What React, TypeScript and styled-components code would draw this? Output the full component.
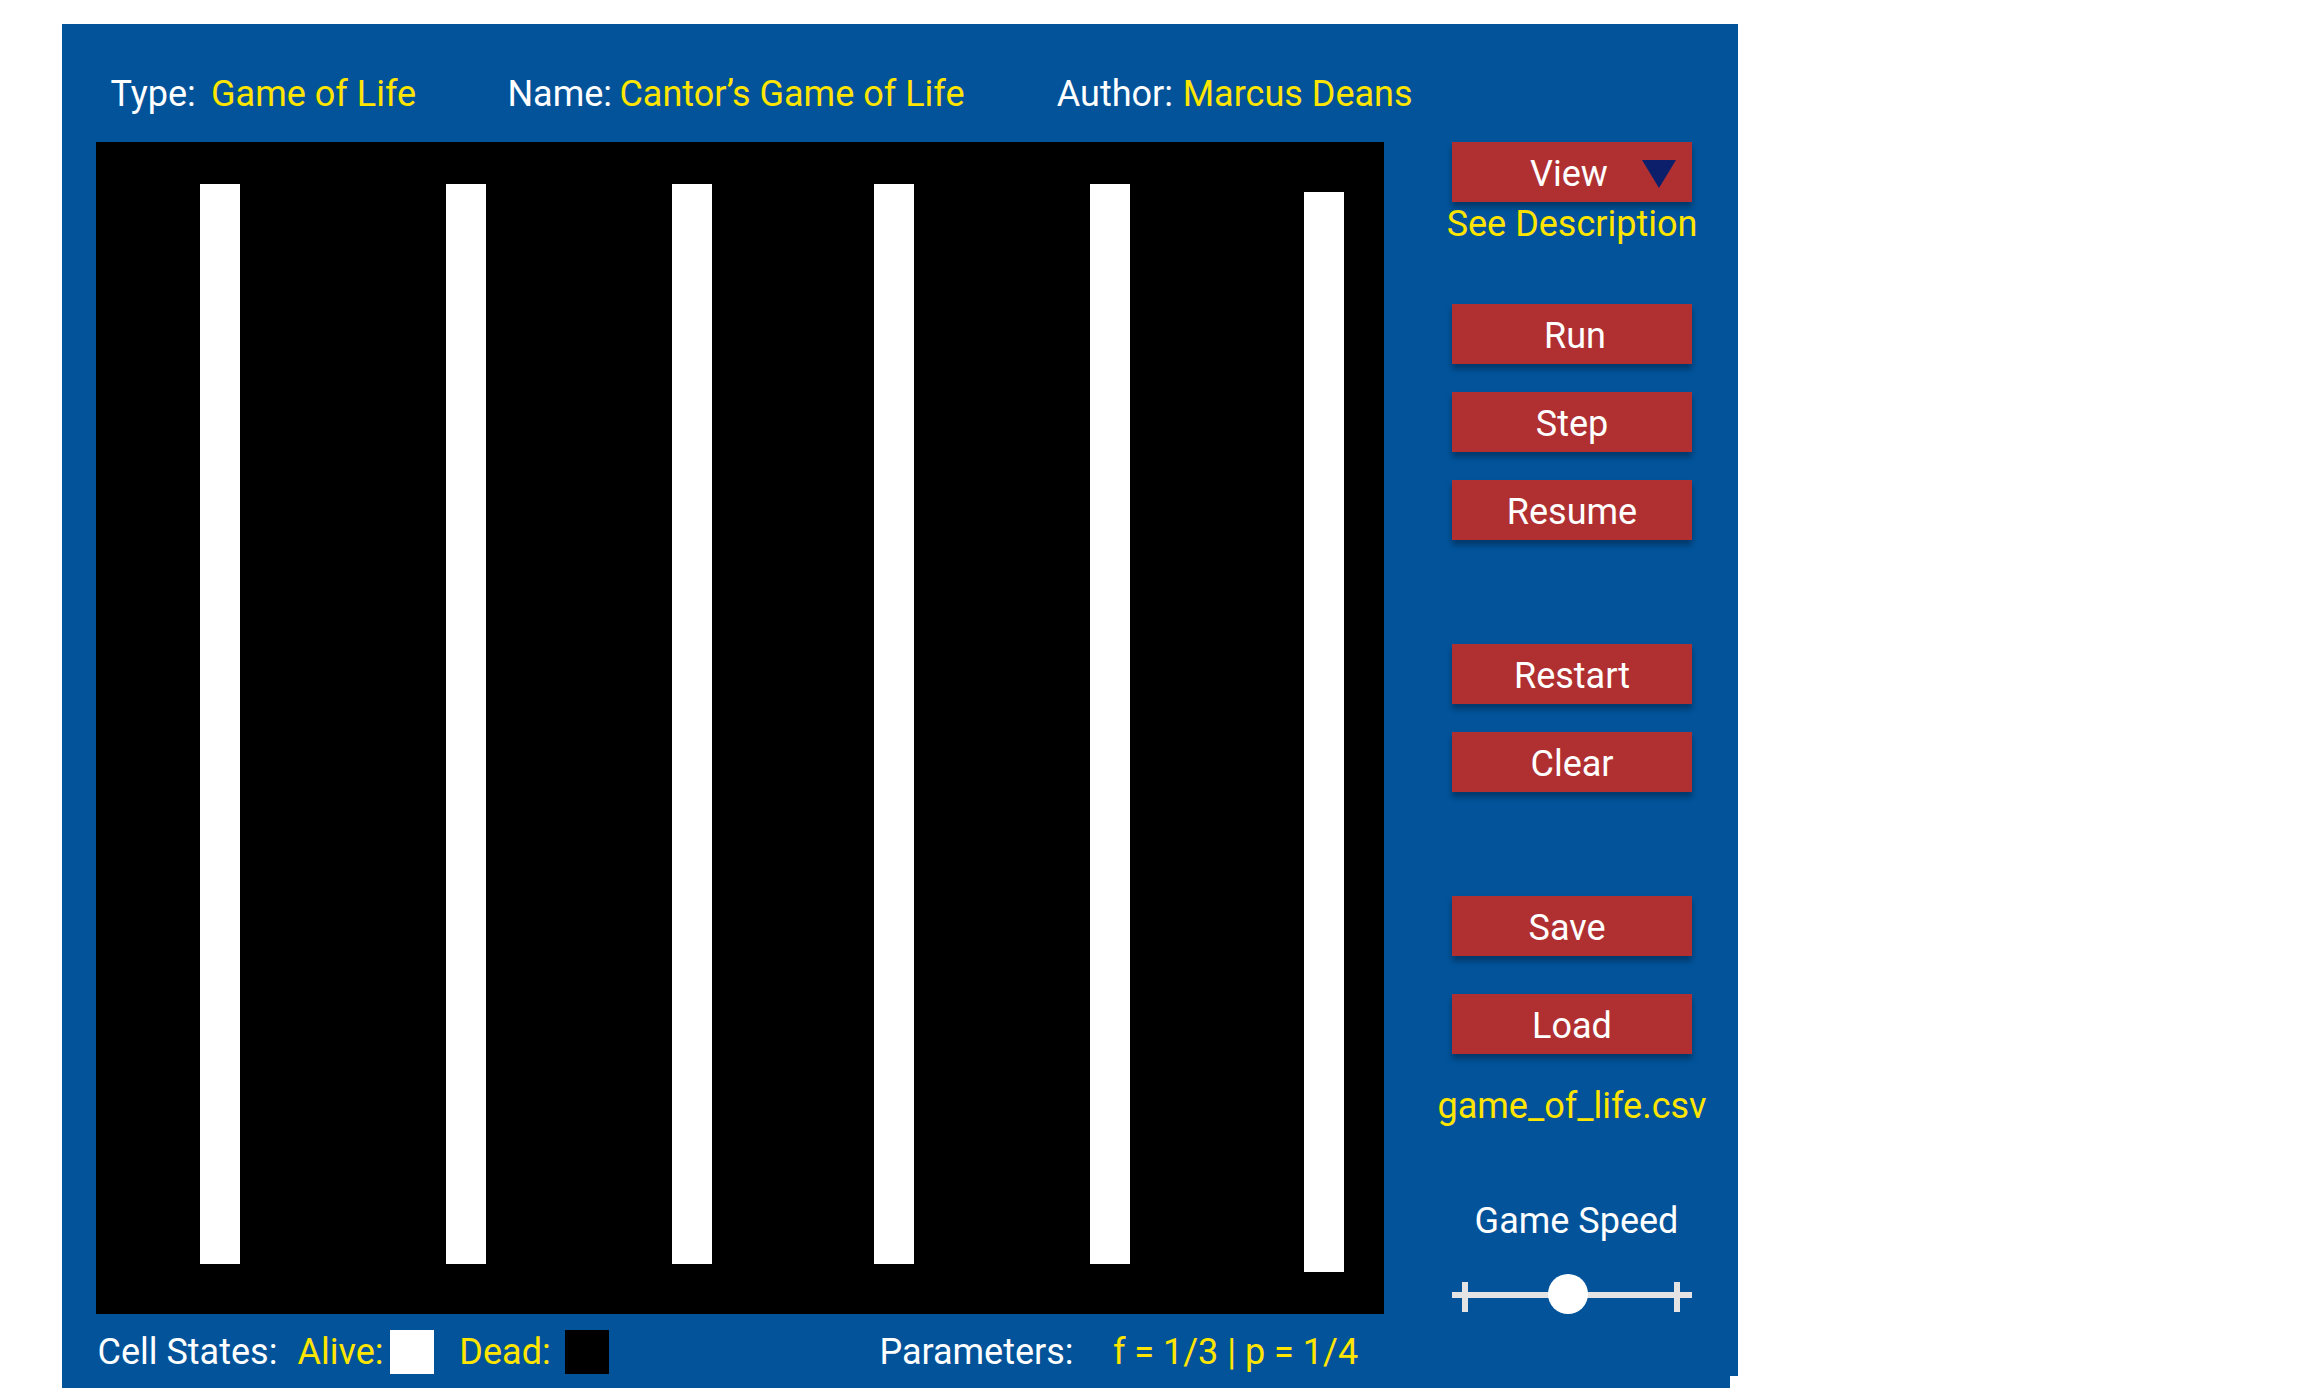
import React from "react";
import styled, { createGlobalStyle } from "styled-components";

const BLUE = "#02539a";
const RED = "#b03032";
const YELLOW = "#ffe500";
const NAVY = "#0c1f6b";

const GlobalStyle = createGlobalStyle`
  html, body { margin: 0; padding: 0; background: #ffffff; }
  body { font-family: Roboto, "Noto Sans", "Liberation Sans", sans-serif; }
  * { box-sizing: border-box; }
`;

const Page = styled.div`
  width: 2304px;
  height: 1400px;
  background: #ffffff;
  padding: 24px 0 0 62px;
`;

const Panel = styled.section`
  position: relative;
  width: 1676px;
  height: 1364px;
  background: ${BLUE};
  padding: 47.5px 0 0 34px;
  display: flex;
  flex-direction: column;
  &::after {
    content: "";
    position: absolute;
    right: 0;
    bottom: 0;
    width: 8px;
    height: 12px;
    background: #ffffff;
  }
`;

const Header = styled.header`
  display: flex;
  align-items: baseline;
  padding-left: 14.5px;
  height: 44px;
  font-size: 36px;
  line-height: 44px;
  white-space: nowrap;
`;

const Field = styled.div<{ $ml: number; $gap: number }>`
  display: flex;
  margin-left: ${(p) => p.$ml}px;
  gap: ${(p) => p.$gap}px;
`;

const Label = styled.span`
  color: #ffffff;
`;

const Value = styled.span`
  color: ${YELLOW};
`;

const Body = styled.div`
  display: flex;
  gap: 68px;
  margin-top: 26.5px;
`;

const Board = styled.div`
  flex: none;
  width: 1288px;
  height: 1172px;
  background: #000000;
  svg {
    display: block;
  }
`;

const Side = styled.aside`
  width: 240px;
  display: flex;
  flex-direction: column;
  align-items: center;
`;

const Button = styled.button<{ $mt: number; $nudge?: number }>`
  position: relative;
  flex: none;
  margin-top: ${(p) => p.$mt}px;
  width: 240px;
  height: 60px;
  border: 0;
  border-radius: 0;
  background: ${RED};
  color: #ffffff;
  font-family: Roboto, "Noto Sans", sans-serif;
  font-size: 36px;
  line-height: 56px;
  display: flex;
  align-items: center;
  justify-content: center;
  box-shadow: 0 5px 6px rgba(0, 0, 0, 0.32);
  padding: 4px ${(p) => (p.$nudge && p.$nudge < 0 ? -2 * p.$nudge : 0)}px 0
    ${(p) => (p.$nudge && p.$nudge > 0 ? 2 * p.$nudge : 0)}px;
  cursor: pointer;
`;

const Caret = styled.span`
  position: absolute;
  right: 16px;
  top: 18px;
  width: 0;
  height: 0;
  border-left: 17px solid transparent;
  border-right: 17px solid transparent;
  border-top: 28px solid ${NAVY};
`;

const SideText = styled.div<{ $mt: number; $color: string; $nudge?: number }>`
  margin-top: ${(p) => p.$mt}px;
  font-size: 36px;
  line-height: 42px;
  color: ${(p) => p.$color};
  white-space: nowrap;
  padding-left: ${(p) => (p.$nudge ? 2 * p.$nudge : 0)}px;
`;

const Slider = styled.div`
  position: relative;
  margin-top: 32px;
  width: 240px;
  height: 40px;
`;

const Track = styled.div`
  position: absolute;
  left: 0;
  right: 0;
  top: 18px;
  height: 6px;
  background: #e4e4e4;
`;

const Tick = styled.div<{ $left: number }>`
  position: absolute;
  left: ${(p) => p.$left}px;
  top: 8px;
  width: 6px;
  height: 30px;
  background: #e4e4e4;
`;

const Thumb = styled.div<{ $left: number }>`
  position: absolute;
  left: ${(p) => p.$left}px;
  top: 0;
  width: 40px;
  height: 40px;
  border-radius: 50%;
  background: #ffffff;
`;

const Footer = styled.footer`
  display: flex;
  align-items: center;
  margin-top: 16px;
  padding-left: 1.5px;
  height: 44px;
  font-size: 36px;
  line-height: 44px;
  white-space: nowrap;
`;

const FootText = styled.span<{ $ml: number; $yellow?: boolean }>`
  margin-left: ${(p) => p.$ml}px;
  color: ${(p) => (p.$yellow ? YELLOW : "#ffffff")};
`;

const Swatch = styled.span<{ $ml: number; $fill: string }>`
  flex: none;
  margin-left: ${(p) => p.$ml}px;
  width: 44px;
  height: 44px;
  background: ${(p) => p.$fill};
`;

const bars = [
  { x: 104, y: 42, h: 1080 },
  { x: 350, y: 42, h: 1080 },
  { x: 576, y: 42, h: 1080 },
  { x: 778, y: 42, h: 1080 },
  { x: 994, y: 42, h: 1080 },
  { x: 1208, y: 50, h: 1080 },
];

export default function App() {
  return (
    <>
      <GlobalStyle />
      <Page>
        <Panel>
          <Header>
            <Field $ml={0} $gap={15.3}>
              <Label>Type:</Label>
              <Value>Game of Life</Value>
            </Field>
            <Field $ml={91.3} $gap={7.4}>
              <Label>Name:</Label>
              <Value>Cantor’s Game of Life</Value>
            </Field>
            <Field $ml={92.3} $gap={9.7}>
              <Label>Author:</Label>
              <Value>Marcus Deans</Value>
            </Field>
          </Header>
          <Body>
            <Board>
              <svg width="1288" height="1172" viewBox="0 0 1288 1172">
                {bars.map((b, i) => (
                  <rect key={i} x={b.x} y={b.y} width={40} height={b.h} fill="#ffffff" />
                ))}
              </svg>
            </Board>
            <Side>
              <Button $mt={0} $nudge={-3}>
                View
                <Caret />
              </Button>
              <SideText $mt={1.4} $color={YELLOW}>
                See Description
              </SideText>
              <Button $mt={58.6} $nudge={3}>Run</Button>
              <Button $mt={28}>Step</Button>
              <Button $mt={28}>Resume</Button>
              <Button $mt={104}>Restart</Button>
              <Button $mt={28}>Clear</Button>
              <Button $mt={104} $nudge={-5}>Save</Button>
              <Button $mt={38}>Load</Button>
              <SideText $mt={31} $color={YELLOW}>
                game_of_life.csv
              </SideText>
              <SideText $mt={73} $color="#ffffff" $nudge={4.5}>
                Game Speed
              </SideText>
              <Slider>
                <Track />
                <Tick $left={10} />
                <Tick $left={222} />
                <Thumb $left={96} />
              </Slider>
            </Side>
          </Body>
          <Footer>
            <FootText $ml={0}>Cell States:</FootText>
            <FootText $ml={20.1} $yellow>Alive:</FootText>
            <Swatch $ml={6.4} $fill="#ffffff" />
            <FootText $ml={25.5} $yellow>Dead:</FootText>
            <Swatch $ml={14.2} $fill="#000000" />
            <FootText $ml={270.5}>Parameters:</FootText>
            <FootText $ml={39.3} $yellow>f = 1/3 | p = 1/4</FootText>
          </Footer>
        </Panel>
      </Page>
    </>
  );
}
